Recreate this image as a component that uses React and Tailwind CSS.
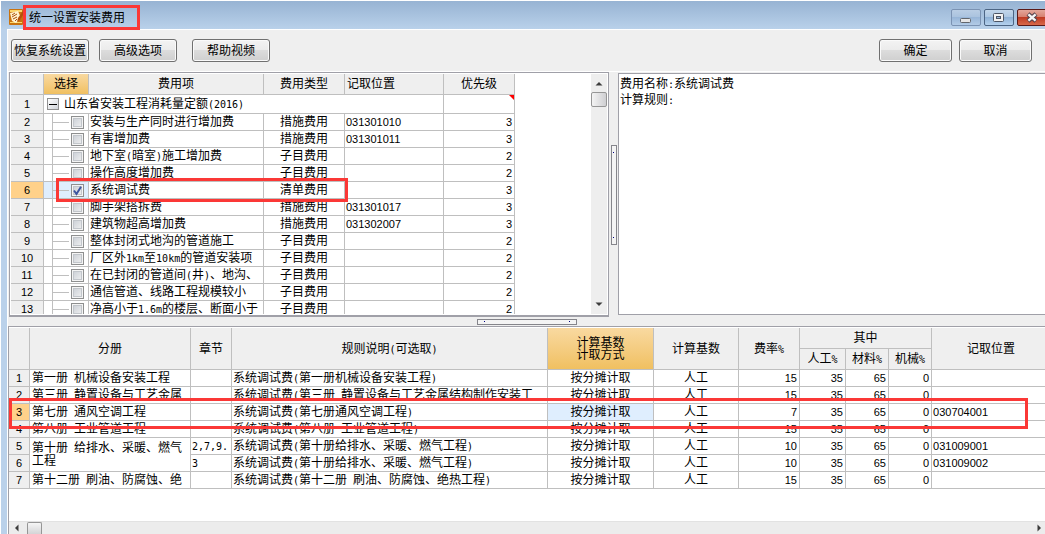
import { useState } from "react";

const feeItems = [
  { name: "安装与生产同时进行增加费", type: "措施费用", code: "031301010", level: 3 },
  { name: "有害增加费", type: "措施费用", code: "031301011", level: 3 },
  { name: "地下室(暗室)施工增加费", type: "子目费用", code: "", level: 2 },
  { name: "操作高度增加费", type: "子目费用", code: "", level: 2 },
  { name: "系统调试费", type: "清单费用", code: "", level: 3 },
  { name: "脚手架搭拆费", type: "措施费用", code: "031301017", level: 3 },
  { name: "建筑物超高增加费", type: "措施费用", code: "031302007", level: 3 },
  { name: "整体封闭式地沟的管道施工", type: "子目费用", code: "", level: 2 },
  { name: "厂区外1km至10km的管道安装项", type: "子目费用", code: "", level: 2 },
  { name: "在已封闭的管道间(井)、地沟、", type: "子目费用", code: "", level: 2 },
  { name: "通信管道、线路工程规模较小", type: "子目费用", code: "", level: 2 },
  { name: "净高小于1.6m的楼层、断面小于", type: "子目费用", code: "", level: 2 },
];

const rules = [
  { book: "第一册 机械设备安装工程", chapter: "", rule: "系统调试费(第一册机械设备安装工程)", rate: 15, code: "" },
  { book: "第三册 静置设备与工艺金属", chapter: "", rule: "系统调试费(第三册 静置设备与工艺金属结构制作安装工", rate: 15, code: "" },
  { book: "第七册 通风空调工程", chapter: "", rule: "系统调试费(第七册通风空调工程)", rate: 7, code: "030704001" },
  { book: "第八册 工业管道工程", chapter: "", rule: "系统调试费(第八册 工业管道工程)", rate: 15, code: "" },
  { book: "第十册 给排水、采暖、燃气工程", span: 2, chapter: "2,7,9.", rule: "系统调试费(第十册给排水、采暖、燃气工程)", rate: 10, code: "031009001" },
  { book: null, chapter: "3", rule: "系统调试费(第十册给排水、采暖、燃气工程)", rate: 10, code: "031009002" },
  { book: "第十二册 刷油、防腐蚀、绝", chapter: "", rule: "系统调试费(第十二册 刷油、防腐蚀、绝热工程)", rate: 15, code: "" },
];

const cell = "border-r border-b border-[#bfbfbf] p-0 overflow-hidden whitespace-nowrap";
const head = "border-r border-b border-[#bfbfbf] p-0 font-normal bg-[#efefef]";
const activeHead =
  "border-r border-b border-[#bfbfbf] p-0 font-normal bg-gradient-to-b from-[#f9d9a0] to-[#f0c060]";
const num = "font-['Liberation_Sans',sans-serif] text-[11px] leading-4";

// half-width characters take exactly half of a Chinese character
const Mixed = ({ text }) =>
  text.split(/([\x20-\x7e]+)/).map((part, i) =>
    i % 2 ? (
      <span
        key={i}
        className="font-['DejaVu_Sans_Mono',monospace] text-[10px] leading-none whitespace-pre"
      >
        {part}
      </span>
    ) : (
      part
    )
  );

const ToolButton = ({ children, className = "" }) => (
  <button
    type="button"
    className={`h-[23px] shrink-0 rounded-[3px] border border-[#707070] bg-linear-[to_bottom,#f3f3f3_0%,#ebebeb_48%,#dcdcdc_50%,#cfcfcf_100%] text-center leading-5 shadow-[inset_0_0_0_1px_#fafafa] ${className}`}
  >
    {children}
  </button>
);

const Arrow = ({ d }) => (
  <svg width="8" height="8" viewBox="0 0 8 8" fill="#3c3c3c" aria-hidden="true">
    <path d={d} />
  </svg>
);

const TitleBar = () => (
  <header className="flex h-7 items-start bg-gradient-to-b from-[#97b3d3] to-[#b9d1ea] pl-2">
    <svg className="mt-2 shrink-0" width="14" height="16" viewBox="0 0 14 16" aria-hidden="true">
      <rect width="14" height="16" rx="1" fill="#c9730f" />
      <path d="M1 1h12v2H1zM1 13h12v1H1z" fill="#fbd66c" />
      <path d="M1 4l8-2 3 7-5 5-4-2z" fill="#fff3cf" />
      <path d="M3 6l3-2M3 8l5-3M4 10l4-2M6 12l2-2" stroke="#a8500e" fill="none" />
      <path d="M14 2L9 9l-1 4 3-2 3-5z" fill="#b4510b" />
    </svg>
    <h1 className="relative z-10 mt-1 h-[25px] w-[117px] shrink-0 border-3 border-[#fb3836] pl-[3px] leading-5">
      统一设置安装费用
    </h1>
    <div className="ml-auto flex gap-[3px] overflow-hidden pt-2">
      <button
        type="button"
        aria-label="最小化"
        className="flex h-[17px] w-[30px] items-center justify-center rounded-[2px] border border-[#7b93b3] bg-linear-[to_bottom,#b9cde4_0%,#a9c2de_50%,#98b6d8_50%,#b2cbe6_100%]"
      >
        <svg width="12" height="12" viewBox="0 0 12 12" aria-hidden="true">
          <rect x="0.5" y="6.5" width="10" height="4" rx="1" fill="#e6e6e6" stroke="#62666c" />
        </svg>
      </button>
      <button
        type="button"
        aria-label="最大化"
        className="flex h-[17px] w-[30px] items-center justify-center rounded-[2px] border border-[#4c6584] bg-linear-[to_bottom,#c3d6ea_0%,#abc6e2_50%,#8fb1d6_50%,#b5d2ee_100%]"
      >
        <svg width="12" height="12" viewBox="0 0 12 12" aria-hidden="true">
          <rect x="0.5" y="1.5" width="10" height="8" rx="1" fill="#f2f2f2" stroke="#4d5665" />
          <rect x="3.5" y="4.5" width="4" height="2" fill="#9cb8d8" stroke="#4d5665" />
        </svg>
      </button>
      <button
        type="button"
        aria-label="关闭"
        className="-mr-[2px] flex h-[17px] w-[30px] items-center justify-center rounded-[2px] border border-[#5a1a18] bg-linear-[to_bottom,#e3a79b_0%,#d6806f_48%,#bf3c24_50%,#d8694a_100%]"
      >
        <svg width="12" height="11" viewBox="0 0 12 11" aria-hidden="true">
          <path d="M2 2l8 7M10 2l-8 7" stroke="#54434c" strokeWidth="4.4" />
          <path d="M2.4 2.3l7.2 6.4M9.6 2.3l-7.2 6.4" stroke="#f6f6f6" strokeWidth="2.4" />
        </svg>
      </button>
    </div>
  </header>
);

const FeeTable = ({ checked, onToggle }) => (
  <table className="w-[504px] shrink-0 table-fixed border-separate border-spacing-0 self-start">
    <colgroup>
      <col className="w-[33px]" />
      <col className="w-[45px]" />
      <col className="w-[175px]" />
      <col className="w-[81px]" />
      <col className="w-[99px]" />
      <col className="w-[71px]" />
    </colgroup>
    <thead>
      <tr className="h-[21px]">
        <th className={head} />
        <th className={activeHead}>选择</th>
        <th className={head}>费用项</th>
        <th className={head}>费用类型</th>
        <th className={`${head} pl-0.5 text-left`}>记取位置</th>
        <th className={head}>优先级</th>
      </tr>
    </thead>
    <tbody>
      <tr className="h-[19px]">
        <td className={`${cell} ${num} bg-[#efefef] text-center`}>1</td>
        <td colSpan={4} className={cell}>
          <div className="flex items-center gap-[5px] pl-[3px]">
            <button
              type="button"
              aria-label="折叠"
              className="flex size-3 items-center justify-center border border-[#919191] bg-gradient-to-br from-white to-[#d0d4da]"
            >
              <span className="h-px w-2 bg-black" />
            </button>
            <span>
              <Mixed text="山东省安装工程消耗量定额(2016)" />
            </span>
          </div>
        </td>
        <td className={`${cell} relative`}>
          <svg className="absolute top-0 right-0" width="5" height="5" viewBox="0 0 5 5" aria-hidden="true">
            <path d="M0 0h5v5z" fill="#f00" />
          </svg>
        </td>
      </tr>
      {feeItems.map((item, i) => {
        const selected = item.name === "系统调试费";
        return (
          <tr key={item.name} className="h-[17px]">
            <td className={`${cell} ${num} text-center ${selected ? "bg-[#ffd18a]" : "bg-[#efefef]"}`}>
              {i + 2}
            </td>
            <td className={`${cell} ${selected ? "bg-[#dfeefe]" : ""}`}>
              <div className="flex h-4 items-center pl-2">
                <span className="h-4 w-px bg-[#bfbfbf]" />
                <span className="mr-0.5 h-px w-4 bg-[#bfbfbf]" />
                <span className="relative flex size-[13px]">
                  <input
                    type="checkbox"
                    aria-label={item.name}
                    checked={checked.includes(i)}
                    onChange={() => onToggle(i)}
                    className="peer size-[13px] appearance-none border border-[#8e8f8f] bg-gradient-to-br from-[#c6cbd2] to-[#f4f4f4] shadow-[inset_0_0_0_1px_#f4f4f4,inset_0_0_0_2px_#c2c6cb]"
                  />
                  <svg
                    className="pointer-events-none absolute inset-0 hidden peer-checked:block"
                    width="13"
                    height="13"
                    viewBox="0 0 13 13"
                    aria-hidden="true"
                  >
                    <path d="M3 6.5l2.5 3.5L10 2.8" fill="none" stroke="#3d55a0" strokeWidth="2" />
                  </svg>
                </span>
              </div>
            </td>
            <td className={`${cell} pl-px`}>
              <Mixed text={item.name} />
            </td>
            <td className={`${cell} text-center`}>{item.type}</td>
            <td className={`${cell} ${num} pl-px`}>{item.code}</td>
            <td className={`${cell} ${num} pr-0.5 text-right`}>{item.level}</td>
          </tr>
        );
      })}
    </tbody>
  </table>
);

const RuleTable = () => (
  <table className="w-[calc(100%+6px)] table-fixed border-separate border-spacing-0">
    <colgroup>
      <col className="w-[21px]" />
      <col className="w-[161px]" />
      <col className="w-[41px]" />
      <col className="w-[316px]" />
      <col className="w-[106px]" />
      <col className="w-[85px]" />
      <col className="w-[61px]" />
      <col className="w-[46px]" />
      <col className="w-[43px]" />
      <col className="w-[43px]" />
      <col />
    </colgroup>
    <thead>
      <tr className="h-[21px]">
        <th rowSpan={2} className={head} />
        <th rowSpan={2} className={head}>分册</th>
        <th rowSpan={2} className={head}>章节</th>
        <th rowSpan={2} className={head}>
          <Mixed text="规则说明(可选取)" />
        </th>
        <th rowSpan={2} className={`${activeHead} leading-3`}>
          计算基数
          <br />
          计取方式
        </th>
        <th rowSpan={2} className={head}>计算基数</th>
        <th rowSpan={2} className={head}>
          <Mixed text="费率%" />
        </th>
        <th colSpan={3} className={head}>其中</th>
        <th rowSpan={2} className={head}>记取位置</th>
      </tr>
      <tr className="h-[21px]">
        {["人工%", "材料%", "机械%"].map((t) => (
          <th key={t} className={head}>
            <Mixed text={t} />
          </th>
        ))}
      </tr>
    </thead>
    <tbody>
      {rules.map((r, i) => (
        <tr key={i} className="h-[17px]">
          <td className={`${cell} ${num} text-center ${i === 2 ? "bg-[#ffd18a]" : "bg-[#efefef]"}`}>
            {i + 1}
          </td>
          {r.book && (
            <td
              rowSpan={r.span || 1}
              className={
                r.span
                  ? "border-r border-b border-[#bfbfbf] p-0 pr-1 pl-0.5 leading-[13px]"
                  : `${cell} pl-0.5`
              }
            >
              <Mixed text={r.book} />
            </td>
          )}
          <td className={`${cell} pl-px`}>
            <Mixed text={r.chapter} />
          </td>
          <td className={`${cell} pl-px`}>
            <Mixed text={r.rule} />
          </td>
          <td className={`${cell} text-center ${i === 2 ? "bg-[#dfeefe]" : ""}`}>按分摊计取</td>
          <td className={`${cell} text-center`}>人工</td>
          <td className={`${cell} ${num} pr-0.5 text-right`}>{r.rate}</td>
          <td className={`${cell} ${num} pr-0.5 text-right`}>35</td>
          <td className={`${cell} ${num} pr-0.5 text-right`}>65</td>
          <td className={`${cell} ${num} pr-0.5 text-right`}>0</td>
          <td className={`${cell} ${num} pl-px`}>{r.code}</td>
        </tr>
      ))}
    </tbody>
  </table>
);

const App = () => {
  const [checked, setChecked] = useState([4]);

  const toggle = (i) =>
    setChecked(checked.includes(i) ? checked.filter((c) => c !== i) : [...checked, i]);

  return (
    <div className="h-screen overflow-hidden bg-white pt-px pl-px font-['Liberation_Sans','Noto_Sans_CJK_SC',sans-serif] text-xs leading-4 text-black">
      <div className="flex h-full flex-col bg-[#bad1ea]">
        <TitleBar />
        <main className="ml-1.5 flex min-h-0 flex-1 flex-col border-t border-l border-white bg-[#efefef]">
          <div className="flex h-[42px] shrink-0 items-start border-b border-white pt-[9px] pr-[13px] pl-[3px]">
            <ToolButton className="w-[78px]">恢复系统设置</ToolButton>
            <ToolButton className="ml-2.5 w-[78px]">高级选项</ToolButton>
            <ToolButton className="ml-[15px] w-[78px]">帮助视频</ToolButton>
            <ToolButton className="ml-auto w-[73px]">确定</ToolButton>
            <ToolButton className="ml-[7px] w-[73px]">取消</ToolButton>
          </div>

          <div className="flex h-[245px] shrink-0 pl-px">
            <section className="relative flex w-[600px] shrink-0 border border-b-2 border-[#a0a0a8] bg-white p-px">
              <div className="flex min-h-0 flex-1 overflow-hidden">
                <FeeTable checked={checked} onToggle={toggle} />
              </div>
              <div className="flex w-4 flex-col items-center bg-[#eeeeee] pt-1.5 pb-1.5">
                <Arrow d="M4 2l3.5 3.5h-7z" />
                <div className="mt-1 h-[15px] w-4 rounded-[2px] border border-[#969696] bg-gradient-to-r from-[#f4f4f4] to-[#cfcfd2]" />
                <div className="mt-auto flex">
                  <Arrow d="M4 6L.5 2.5h7z" />
                </div>
              </div>
              <div className="pointer-events-none absolute top-[105px] left-[46px] h-6 w-[292px] border-3 border-[#fb3836]" />
            </section>
            <div className="flex w-[9px] shrink-0 items-center justify-center">
              <div className="flex h-[100px] w-1.5 flex-col items-center justify-between border border-[#85858b] bg-[#f4f4f4] py-1.5">
                <span className="size-px bg-[#000080]" />
                <span className="size-px bg-[#000080]" />
              </div>
            </div>
            <section className="mt-px mb-0.5 flex-1 border border-r-0 border-[#a0a0a8] bg-white pt-0.5 pl-px">
              <p>
                <Mixed text="费用名称:系统调试费" />
              </p>
              <p>
                <Mixed text="计算规则:" />
              </p>
            </section>
          </div>

          <div className="flex h-[9px] shrink-0 items-center justify-center">
            <div className="flex h-1.5 w-[100px] items-center justify-between border border-[#85858b] bg-[#f4f4f4] px-1.5">
              <span className="size-px bg-[#000080]" />
              <span className="size-px bg-[#000080]" />
            </div>
          </div>

          <section className="relative flex min-h-0 flex-1 flex-col border-t border-l border-[#a0a0a8] bg-white pt-px">
            <div className="min-h-0 flex-1 overflow-hidden">
              <RuleTable />
            </div>
            <div className="flex h-[13px] shrink-0 items-center border-t border-[#e2e2e2] bg-[#ececec] pr-0.5 pl-1">
              <Arrow d="M2 4l3.5-3.5v7z" />
              <div className="ml-1.5 h-3 w-[15px] rounded-t-[2px] border border-b-0 border-[#969696] bg-gradient-to-b from-[#f6f6f6] to-[#d4d4d6]" />
              <div className="ml-auto">
                <Arrow d="M6 4L2.5.5v7z" />
              </div>
            </div>
            <div className="pointer-events-none absolute top-[71px] right-[17px] left-0 h-[31px] border-3 border-[#fb3836]" />
          </section>
        </main>
      </div>
    </div>
  );
};

export default App;
